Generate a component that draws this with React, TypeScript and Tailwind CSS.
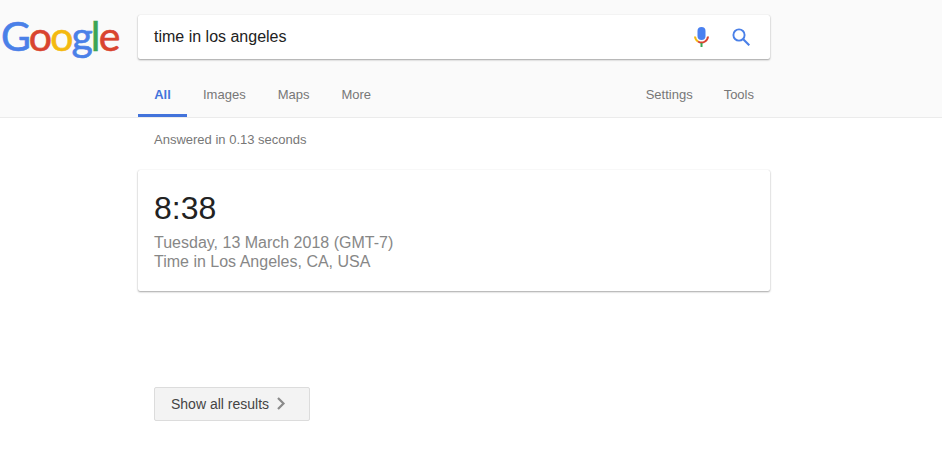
import React from 'react';

const GoogleLogo: React.FC = () => (
  <div className="w-[138px] shrink-0 pl-[1px] pt-[11px] font-['Lato',sans-serif] text-[41px] leading-[50px] tracking-[-1.9px] [-webkit-text-stroke:0.6px]">
    <span className="text-[#4a80e8]">G</span>
    <span className="text-[#d9442f]">o</span>
    <span className="text-[#f4b90f]">o</span>
    <span className="text-[#4a80e8]">g</span>
    <span className="text-[#3aa655]">l</span>
    <span className="text-[#d9442f]">e</span>
  </div>
);

const MicIcon: React.FC = () => (
  <svg width="15" height="21" viewBox="0 0 15 21" fill="none">
    <rect x="3.5" y="0" width="8" height="13" rx="4" fill="#4a80f0" />
    <path d="M1 9.5a6.5 6.5 0 0 0 3 5" stroke="#f4b90f" strokeWidth="2" />
    <path d="M4 14.5a6.5 6.5 0 0 0 7 0 6.5 6.5 0 0 0 3-5" stroke="#d9442f" strokeWidth="2" />
    <rect x="6.5" y="16" width="2" height="4" fill="#3aa655" />
  </svg>
);

const SearchIcon: React.FC = () => (
  <svg width="18" height="18" viewBox="0 0 18 18" fill="none" stroke="#4a80e8">
    <circle cx="7" cy="7" r="5.6" strokeWidth="1.9" />
    <path d="M11 11L17.3 17.3" strokeWidth="2.1" />
  </svg>
);

const TabLink: React.FC<{ label: string }> = ({ label }) => (
  <span className="text-[13px] text-[#777]">{label}</span>
);

export default function App() {
  return (
    <div className="h-[462px] w-[942px] overflow-hidden bg-white font-['Liberation_Sans',Arial,sans-serif]">
      {/* Header */}
      <header className="h-[118px] border-b border-[#ebebeb] bg-[#fafafa]">
        <div className="flex h-[74px] items-start">
          <GoogleLogo />
          <div className="mt-[15px] flex h-[44px] w-[632px] items-center rounded-[2px] bg-white pl-[16px] pr-[20px] shadow-[0_1px_2px_rgba(0,0,0,0.35),0_0_1px_rgba(0,0,0,0.15)]">
            <span className="flex-1 text-[16px] text-[#222]">time in los angeles</span>
            <MicIcon />
            <div className="ml-[23px] flex">
              <SearchIcon />
            </div>
          </div>
        </div>

        {/* Tabs */}
        <nav className="ml-[138px] flex h-[43px] w-[632px] items-start justify-between">
          <div className="flex items-start">
            <div className="h-[43px] w-[49px] border-b-[3px] border-[#4273db] pt-[11px] text-center text-[13px] font-bold text-[#4273db]">
              All
            </div>
            <div className="ml-[16px] flex gap-[32px] pt-[11px]">
              <TabLink label="Images" />
              <TabLink label="Maps" />
              <TabLink label="More" />
            </div>
          </div>
          <div className="flex gap-[31px] pr-[16px] pt-[11px]">
            <TabLink label="Settings" />
            <TabLink label="Tools" />
          </div>
        </nav>
      </header>

      {/* Results */}
      <main className="ml-[138px] w-[632px]">
        <p className="pl-[16px] pt-[14px] text-[13px] leading-[16px] text-[#777]">Answered in 0.13 seconds</p>

        <section className="mt-[22px] h-[121px] rounded-[2px] bg-white pl-[16px] pt-[18px] shadow-[0_1px_2px_rgba(0,0,0,0.35),0_0_1px_rgba(0,0,0,0.15)]">
          <div className="text-[32px] leading-[40px] text-[#222]">8:38</div>
          <div className="mt-[5px] text-[16px] leading-[19px] text-[#878787]">
            <div>Tuesday, 13 March 2018 (GMT-7)</div>
            <div>Time in Los Angeles, CA, USA</div>
          </div>
        </section>

        <button className="ml-[16px] mt-[96px] flex h-[34px] w-[156px] items-center rounded-[2px] border border-[#dcdcdc] bg-[#f3f3f3] pl-[16px] text-[14px] text-[#444]">
          Show all results
          <svg className="ml-[7px]" width="10" height="14" viewBox="0 0 10 14" fill="none" stroke="#8a8a8a" strokeWidth="2.2">
            <path d="M2 1L7.5 6.5L2 12" />
          </svg>
        </button>
      </main>
    </div>
  );
}
